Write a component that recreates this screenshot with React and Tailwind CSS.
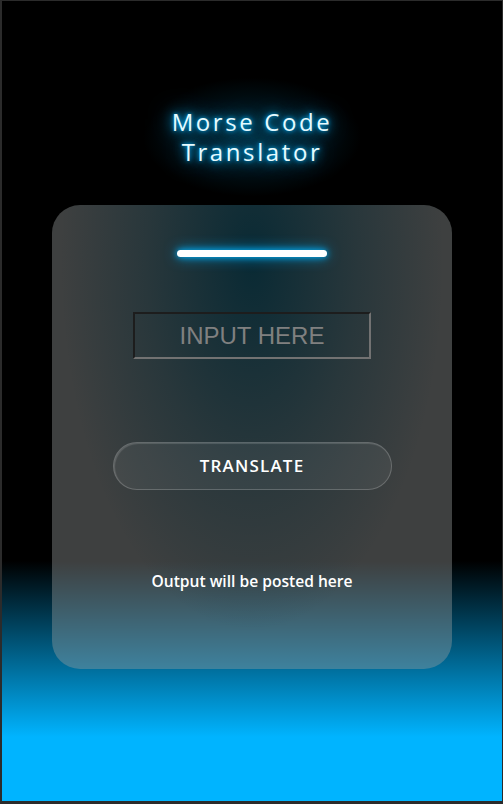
export default function App() {
  return (
    <div className="w-[503px] h-[804px] bg-[#2b2b2b] pl-[2px] pt-[1px] pr-[1px] pb-[3px]">
      <div className="h-full w-full flex flex-col items-center pt-[106px] bg-[linear-gradient(to_bottom,#000_70%,#00b4ff_92%)] font-['Open_Sans',sans-serif]">
        {/* Title */}
        <div className="relative">
          <div className="absolute inset-[-30px] rounded-full bg-[radial-gradient(ellipse_at_center,rgba(0,70,95,0.55),transparent_70%)]" />
          <h1 className="relative flex flex-col items-center text-[24px] leading-[30px] tracking-[2.6px] text-[#e6fbff] [text-shadow:0_0_4px_#00b4ff,0_0_12px_#00b4ff,0_0_24px_#0090cc]">
            <span>Morse Code</span>
            <span>Translator</span>
          </h1>
        </div>

        {/* Card */}
        <div className="mt-[38px] w-[400px] h-[464px] rounded-[28px] flex flex-col items-center pt-[45px] bg-[#9aa0a066] bg-[radial-gradient(ellipse_48%_80%_at_50%_12%,rgba(0,38,50,0.85),rgba(0,38,50,0.35)_55%,transparent)]">
          <div className="w-[150px] h-[7px] rounded-full bg-white shadow-[0_0_6px_#00b4ff,0_0_14px_#0096d6]" />

          <input
            type="text"
            placeholder="INPUT HERE"
            className="mt-[55px] w-[238px] h-[47px] bg-transparent border-2 [border-style:inset] border-[#727272] text-center text-[24px] text-white placeholder-[#808080] font-['Liberation_Sans',sans-serif] outline-none"
          />

          <button className="mt-[83px] w-[279px] h-[48px] rounded-full border border-white/20 bg-white/[0.06] text-white text-[17px] tracking-[1.2px] font-semibold shadow-[inset_1px_1px_1px_rgba(255,255,255,0.15)]">
            TRANSLATE
          </button>

          <p className="mt-[80px] text-white text-[15.6px] font-semibold">Output will be posted here</p>
        </div>
      </div>
    </div>
  );
}
